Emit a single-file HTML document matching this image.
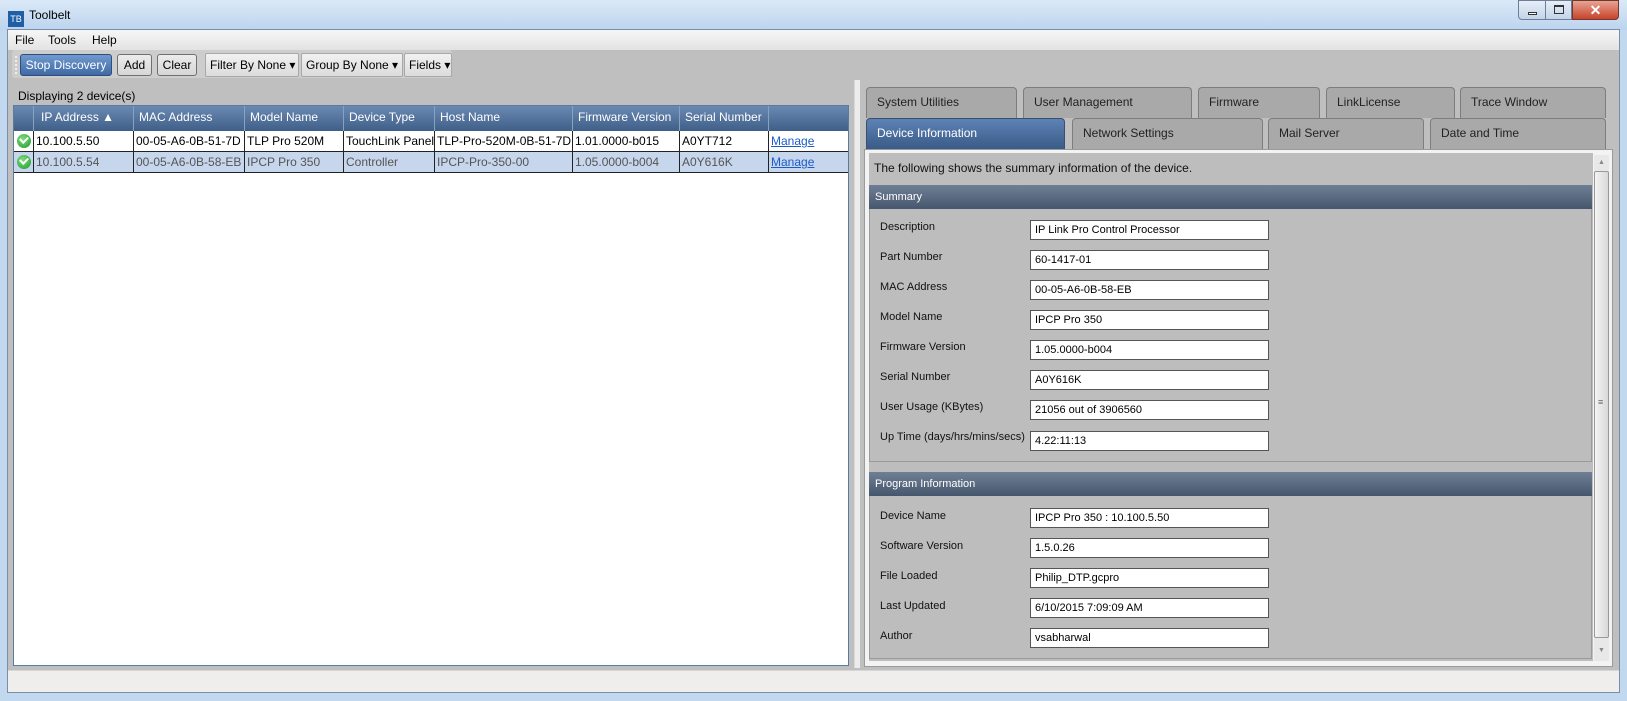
<!DOCTYPE html>
<html><head><style>
*{box-sizing:border-box;margin:0;padding:0}
body{width:1627px;height:701px;overflow:hidden;background:#c2d8ef;font-family:"Liberation Sans",sans-serif;font-size:12px;color:#000;position:relative}
.a{position:absolute}
.title{left:0;top:0;width:1627px;height:30px;background:linear-gradient(#dbe9f7,#bcd4ee)}
.client{left:7px;top:29px;width:1613px;height:664px;background:#bfbfbf;border:1px solid #7a8ea8}
.menu{left:8px;top:30px;width:1611px;height:20px;background:linear-gradient(#f6f6f6,#e3e3e3)}
.menu span{position:absolute;top:3px;font-size:12px}
.tb{top:50px;height:28px;left:12px;width:440px;background:#cdcdcd;border-radius:3px}
.btn{top:54px;height:22px;border:1px solid #707070;border-radius:3px;background:linear-gradient(#ececec,#d6d6d6);text-align:center;line-height:20px;font-size:12px}
.dd{top:53px;height:24px;border:1px solid #a8a8a8;border-radius:2px;background:linear-gradient(#f2f2f2,#dcdcdc);line-height:22px;padding-left:4px;font-size:12px}
.grid{left:13px;top:105px;width:836px;height:561px;background:#fff;border:1px solid #5b7aa0}
.hdr{top:0;height:25px;background:linear-gradient(#6a89b3,#3f5e88);color:#fff}
.c{position:absolute;height:100%;border-right:1px solid #8aa2c2;padding-left:5px;line-height:22px;white-space:nowrap;overflow:hidden;font-size:12px}
.row{left:0;width:834px;height:21px;border-bottom:1px solid #222}
.row .c{border-right:1px solid #222;line-height:20px;padding-left:2px}
.sel{background:#c6d6ec;color:#555}
.chk{position:absolute;left:3px;top:3px;width:14px;height:14px;border-radius:50%;background:radial-gradient(circle at 40% 35%,#7fdc7f,#1e9a2a)}
.chk:after{content:"";position:absolute;left:3px;top:2px;width:6px;height:4px;border-left:2px solid #fff;border-bottom:2px solid #fff;transform:rotate(-45deg)}
a{color:#1c5cc8;text-decoration:underline}
.tab{height:31px;border:1px solid #7d7d7d;border-bottom:none;border-radius:4px 4px 0 0;background:#a9a9a9;padding-left:10px;line-height:29px;font-size:12px;color:#222}
.tab.on{background:linear-gradient(#5d82b5,#3a5b88);color:#fff;border-color:#3a5070}
.panel{left:864px;top:149px;width:749px;height:518px;background:#f3f3f3;border:1px solid #9a9a9a}
.inner{left:869px;top:153px;width:724px;height:508px;background:#bdbdbd}
.sh{height:24px;background:linear-gradient(#6f7f95,#46566d);color:#fff;font-size:11px;line-height:24px;padding-left:6px}
.sec{border:1px solid #9a9a9a;border-top:none}
.lbl{font-size:11px;color:#111}
.tx{left:1030px;width:239px;height:20px;background:#fff;border:1px solid #555;font-size:11px;line-height:18px;padding-left:4px}
</style></head><body>
<div class="a title"></div>
<div class="a" style="left:8px;top:11px;width:16px;height:16px;background:#1f5fa6;color:#fff;font-size:9px;line-height:16px;text-align:center">TB</div>
<div class="a" style="left:29px;top:8px;font-size:12px">Toolbelt</div>
<div class="a" style="left:1518px;top:0;width:28px;height:20px;background:linear-gradient(#e6eef8,#c4d4e8);border:1px solid #6d7f96;border-radius:0 0 0 4px"><div class="a" style="left:9px;top:11px;width:9px;height:3px;border:1px solid #333;background:#fff"></div></div>
<div class="a" style="left:1545px;top:0;width:27px;height:20px;background:linear-gradient(#e6eef8,#c4d4e8);border:1px solid #6d7f96"><div class="a" style="left:8px;top:4px;width:10px;height:9px;border:1px solid #333;border-top-width:2px"></div></div>
<div class="a" style="left:1572px;top:0;width:47px;height:20px;background:linear-gradient(#e8a493,#c7432b);border:1px solid #6d3a30;border-radius:0 0 4px 0;color:#fff;font-weight:bold;text-align:center;line-height:18px;font-size:14px">✕</div>
<div class="a client"></div>
<div class="a menu"><span style="left:7px">File</span><span style="left:40px">Tools</span><span style="left:84px">Help</span></div>
<div class="a tb"></div>
<div class="a" style="left:15px;top:56px;width:2px;height:18px;border-left:2px dotted #eee"></div>
<div class="a btn" style="left:20px;width:92px;background:linear-gradient(#7099cf,#3f6aa5);color:#fff;border-color:#2d4d7a">Stop Discovery</div>
<div class="a btn" style="left:117px;width:35px">Add</div>
<div class="a btn" style="left:157px;width:40px">Clear</div>
<div class="a dd" style="left:205px;width:94px">Filter By None ▾</div>
<div class="a dd" style="left:301px;width:102px">Group By None ▾</div>
<div class="a dd" style="left:404px;width:48px">Fields ▾</div>
<div class="a" style="left:18px;top:89px">Displaying 2 device(s)</div>
<div class="a grid">
 <div class="a hdr" style="left:0;width:834px">
  <div class="c" style="left:0;width:20px"></div>
  <div class="c" style="left:20px;width:100px;padding-left:7px">IP Address ▲</div>
  <div class="c" style="left:120px;width:111px">MAC Address</div>
  <div class="c" style="left:231px;width:99px">Model Name</div>
  <div class="c" style="left:330px;width:91px">Device Type</div>
  <div class="c" style="left:421px;width:138px">Host Name</div>
  <div class="c" style="left:559px;width:107px">Firmware Version</div>
  <div class="c" style="left:666px;width:89px">Serial Number</div>
 </div>
 <div class="a row" style="top:25px">
  <div class="c" style="left:0;width:20px"><div class="chk"></div></div>
  <div class="c" style="left:20px;width:100px">10.100.5.50</div>
  <div class="c" style="left:120px;width:111px">00-05-A6-0B-51-7D</div>
  <div class="c" style="left:231px;width:99px">TLP Pro 520M</div>
  <div class="c" style="left:330px;width:91px">TouchLink Panel</div>
  <div class="c" style="left:421px;width:138px">TLP-Pro-520M-0B-51-7D</div>
  <div class="c" style="left:559px;width:107px">1.01.0000-b015</div>
  <div class="c" style="left:666px;width:89px">A0YT712</div>
  <div class="c" style="left:755px;width:79px;border-right:none"><a>Manage</a></div>
 </div>
 <div class="a row sel" style="top:46px">
  <div class="c" style="left:0;width:20px"><div class="chk"></div></div>
  <div class="c" style="left:20px;width:100px">10.100.5.54</div>
  <div class="c" style="left:120px;width:111px">00-05-A6-0B-58-EB</div>
  <div class="c" style="left:231px;width:99px">IPCP Pro 350</div>
  <div class="c" style="left:330px;width:91px">Controller</div>
  <div class="c" style="left:421px;width:138px">IPCP-Pro-350-00</div>
  <div class="c" style="left:559px;width:107px">1.05.0000-b004</div>
  <div class="c" style="left:666px;width:89px">A0Y616K</div>
  <div class="c" style="left:755px;width:79px;border-right:none"><a>Manage</a></div>
 </div>
</div>
<div class="a" style="left:854px;top:80px;width:6px;height:588px;background:#ececec;border-left:1px solid #d8d8d8"></div>
<div class="a tab" style="left:866px;top:87px;width:151px">System Utilities</div>
<div class="a tab" style="left:1023px;top:87px;width:169px">User Management</div>
<div class="a tab" style="left:1198px;top:87px;width:122px">Firmware</div>
<div class="a tab" style="left:1326px;top:87px;width:129px">LinkLicense</div>
<div class="a tab" style="left:1460px;top:87px;width:146px">Trace Window</div>
<div class="a tab on" style="left:866px;top:118px;width:199px">Device Information</div>
<div class="a tab" style="left:1072px;top:118px;width:191px">Network Settings</div>
<div class="a tab" style="left:1268px;top:118px;width:156px">Mail Server</div>
<div class="a tab" style="left:1430px;top:118px;width:176px">Date and Time</div>
<div class="a panel"></div>
<div class="a inner"></div>
<div class="a" style="left:1594px;top:155px;width:15px;height:506px;background:#e8e8e8"></div>
<div class="a" style="left:1598px;top:159px;font-size:7px;color:#888">▲</div>
<div class="a" style="left:1594px;top:171px;width:15px;height:467px;border:1px solid #999;border-radius:2px;background:linear-gradient(90deg,#f4f4f4,#d8d8d8)"></div>
<div class="a" style="left:1598px;top:397px;font-size:9px;color:#666">≡</div>
<div class="a" style="left:1598px;top:647px;font-size:7px;color:#888">▼</div>
<div class="a" style="left:874px;top:161px;font-size:12px;color:#111">The following shows the summary information of the device.</div>
<div class="a sh" style="left:869px;top:185px;width:723px">Summary</div>
<div class="a sec" style="left:869px;top:209px;width:723px;height:253px"></div>
<div class="a sh" style="left:869px;top:472px;width:723px">Program Information</div>
<div class="a sec" style="left:869px;top:496px;width:723px;height:163px"></div>

<div class="a lbl" style="left:880px;top:221px">Description</div><div class="a tx" style="top:220px">IP Link Pro Control Processor</div>
<div class="a lbl" style="left:880px;top:251px">Part Number</div><div class="a tx" style="top:250px">60-1417-01</div>
<div class="a lbl" style="left:880px;top:281px">MAC Address</div><div class="a tx" style="top:280px">00-05-A6-0B-58-EB</div>
<div class="a lbl" style="left:880px;top:311px">Model Name</div><div class="a tx" style="top:310px">IPCP Pro 350</div>
<div class="a lbl" style="left:880px;top:341px">Firmware Version</div><div class="a tx" style="top:340px">1.05.0000-b004</div>
<div class="a lbl" style="left:880px;top:371px">Serial Number</div><div class="a tx" style="top:370px">A0Y616K</div>
<div class="a lbl" style="left:880px;top:401px">User Usage (KBytes)</div><div class="a tx" style="top:400px">21056 out of 3906560</div>
<div class="a lbl" style="left:880px;top:431px">Up Time (days/hrs/mins/secs)</div><div class="a tx" style="top:431px">4.22:11:13</div>

<div class="a lbl" style="left:880px;top:510px">Device Name</div><div class="a tx" style="top:508px">IPCP Pro 350 : 10.100.5.50</div>
<div class="a lbl" style="left:880px;top:540px">Software Version</div><div class="a tx" style="top:538px">1.5.0.26</div>
<div class="a lbl" style="left:880px;top:570px">File Loaded</div><div class="a tx" style="top:568px">Philip_DTP.gcpro</div>
<div class="a lbl" style="left:880px;top:600px">Last Updated</div><div class="a tx" style="top:598px">6/10/2015 7:09:09 AM</div>
<div class="a lbl" style="left:880px;top:630px">Author</div><div class="a tx" style="top:628px">vsabharwal</div>

<div class="a" style="left:8px;top:670px;width:1611px;height:22px;background:#f0eeec;border-top:1px solid #d6d6d6"></div>
</body></html>
